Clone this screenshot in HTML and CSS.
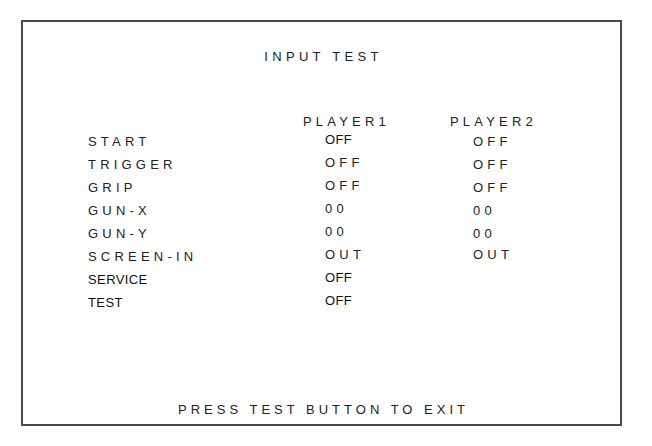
FILE: index.html
```html
<!DOCTYPE html>
<html>
<head>
<meta charset="utf-8">
<link rel="stylesheet" href="styles.css">
</head>
<body>
<div class="screen">
  <div class="title">INPUT TEST</div>
  <div class="table">
    <div class="cell head"></div>
    <div class="cell head">PLAYER1</div>
    <div class="cell head">PLAYER2</div>

    <div class="cell label">START</div>
    <div class="cell val tight up">OFF</div>
    <div class="cell val p2">OFF</div>

    <div class="cell label">TRIGGER</div>
    <div class="cell val up">OFF</div>
    <div class="cell val p2">OFF</div>

    <div class="cell label">GRIP</div>
    <div class="cell val up">OFF</div>
    <div class="cell val p2">OFF</div>

    <div class="cell label">GUN-X</div>
    <div class="cell val up">00</div>
    <div class="cell val p2">00</div>

    <div class="cell label">GUN-Y</div>
    <div class="cell val up">00</div>
    <div class="cell val p2">00</div>

    <div class="cell label">SCREEN-IN</div>
    <div class="cell val up">OUT</div>
    <div class="cell val p2 up">OUT</div>

    <div class="cell label tight">SERVICE</div>
    <div class="cell val tight up">OFF</div>
    <div class="cell"></div>

    <div class="cell label tight">TEST</div>
    <div class="cell val tight up">OFF</div>
    <div class="cell"></div>
  </div>
  <div class="footer">PRESS TEST BUTTON TO EXIT</div>
</div>
</body>
</html>
```

FILE: styles.css
```css
html, body {
  margin: 0;
  padding: 0;
  background: #ffffff;
}

body {
  font-family: "Liberation Sans", Arial, sans-serif;
  font-size: 13px;
  color: #222222;
}

.screen {
  box-sizing: border-box;
  margin: 20px 0 0 21px;
  width: 601px;
  height: 406px;
  border: 2px solid #4a4a4a;
  display: flex;
  flex-direction: column;
}

.title {
  margin-top: 27px;
  text-align: center;
  letter-spacing: 4.3px;
  line-height: 16px;
  padding-left: 4px;
}

.table {
  margin-top: 49px;
  display: grid;
  grid-template-columns: 280px 147px 1fr;
  grid-template-rows: 16px;
  grid-auto-rows: 23px;
  line-height: 23px;
}

.cell {
  letter-spacing: 4.2px;
  white-space: nowrap;
}

.head {
  line-height: 15px;
}

.label {
  padding-left: 65px;
}

.val {
  padding-left: 22px;
}

.val.p2 {
  padding-left: 23px;
}

.up {
  position: relative;
  top: -2px;
}

.tight {
  letter-spacing: 0.4px;
  color: #111111;
}

.footer {
  margin-top: auto;
  margin-bottom: 6px;
  text-align: center;
  letter-spacing: 4px;
  line-height: 16px;
  padding-left: 4px;
}
```
